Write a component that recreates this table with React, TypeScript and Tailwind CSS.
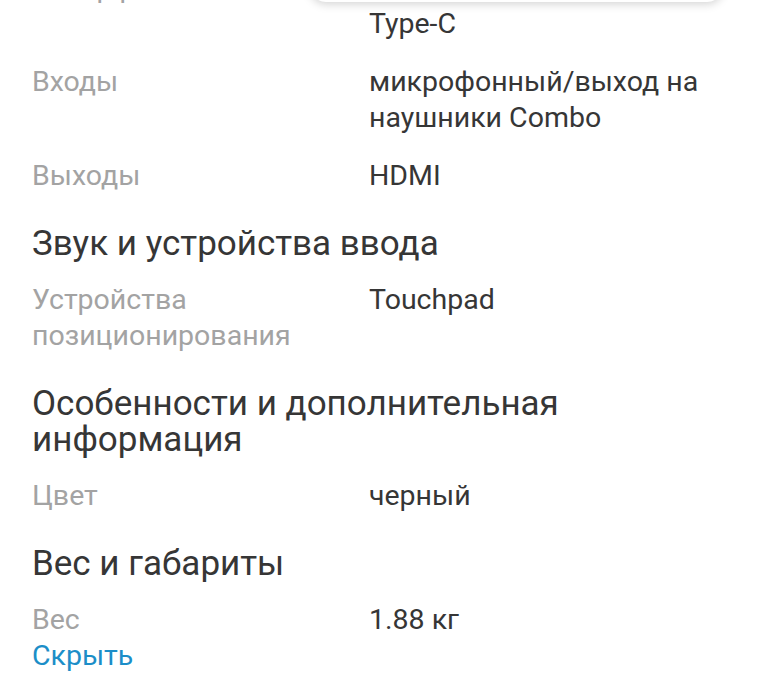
import React from 'react';

type Spec = { label: React.ReactNode; value: React.ReactNode };

const font = { fontFamily: 'Roboto, "Noto Sans", sans-serif' };

const SpecRow: React.FC<Spec & { last?: boolean }> = ({ label, value, last }) => (
  <div className={`grid grid-cols-[337px_1fr] ${last ? '' : 'mb-[22px]'}`}>
    <div className="text-[#a3a3a3] pr-4">{label}</div>
    <div className="text-[#363636]">{value}</div>
  </div>
);

// margin collapses with the row's mb-[22px] above it
const Heading: React.FC<{ children: React.ReactNode }> = ({ children }) => (
  <h3 className="mt-[32px] mb-[20px] text-[35px] leading-[36px] text-[#363636] pr-[180px]">{children}</h3>
);

export default function App() {
  return (
    <div className="relative w-[771px] h-[700px] overflow-hidden bg-white" style={font}>
      {/* floating card cut off at the top */}
      <div className="absolute left-[310px] top-[-60px] w-[413px] h-[62px] bg-white rounded-b-2xl shadow-[0_2px_10px_rgba(0,0,0,0.18)] z-10" />

      <div className="px-8 pt-[6px] -mt-[36px] text-[28.5px] leading-[36px]">
        <SpecRow label="Интерфейсы" value={<>2 x USB 3.2, USB 2.0, USB<br />Type-C</>} />
        <SpecRow label="Входы" value="микрофонный/выход на наушники Combo" />
        <SpecRow label="Выходы" value="HDMI" />

        <Heading>Звук и устройства ввода</Heading>
        <SpecRow label="Устройства позиционирования" value="Touchpad" />

        <Heading>Особенности и дополнительная информация</Heading>
        <SpecRow label="Цвет" value="черный" />

        <Heading>Вес и габариты</Heading>
        <SpecRow label="Вес" value="1.88 кг" last />
        <button className="text-[#1c8ec8] leading-[36px]">Скрыть</button>
      </div>
    </div>
  );
}
